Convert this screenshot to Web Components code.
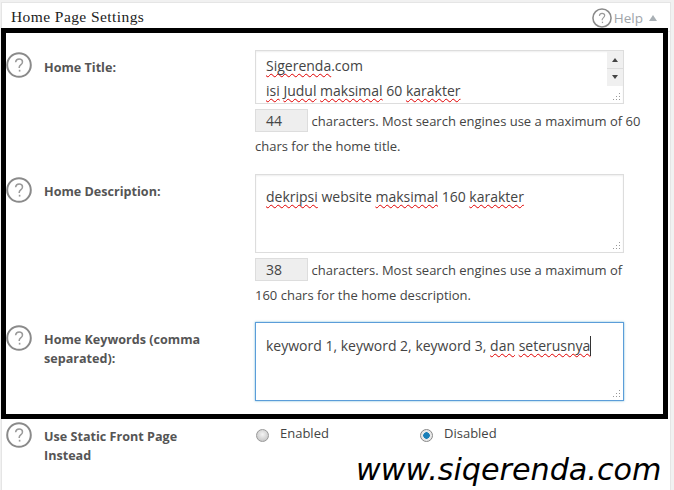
<!DOCTYPE html>
<html>
<head>
<meta charset="utf-8">
<style>
  html, body { margin: 0; padding: 0; }
  body { width: 674px; height: 490px; overflow: hidden; background: #f1f1f1; font-family: "Open Sans", sans-serif; }
  .sq { text-decoration: underline wavy #e00000 1px; text-underline-offset: 2px; text-decoration-skip-ink: none; }
  .caret { display: inline-block; width: 1px; height: 20px; background: #333; vertical-align: -5px; }
</style>
</head>
<body>
<settings-panel heading="Home Page Settings">
  <setting-group>
    <setting-row label="Home Title:" top="17" icon="2" text="8">
      <text-box height="54" pad="2" scroll>
        <span class="sq">Sigerenda</span>.com<br><span class="sq">isi</span> <span class="sq">Judul</span> <span class="sq">maksimal</span> 60 <span class="sq">karakter</span>
      </text-box>
      <char-count value="44"><span slot="first">characters. Most search engines use a maximum of 60</span>chars for the home title.</char-count>
    </setting-row>
    <setting-row label="Home Description:" top="15" icon="3" text="8">
      <text-box height="79" pad="9">
        <span class="sq">dekripsi</span> website <span class="sq">maksimal</span> 160 <span class="sq">karakter</span>
      </text-box>
      <char-count value="38"><span slot="first">characters. Most search engines use a maximum of</span>160 chars for the home description.</char-count>
    </setting-row>
    <setting-row label="Home Keywords (comma separated):" top="14" icon="3" text="8">
      <text-box height="79" pad="10" focused>
        keyword 1, keyword 2, keyword 3, <span class="sq">dan</span> <span class="sq">seterusnya</span><span class="caret"></span>
      </text-box>
    </setting-row>
  </setting-group>
  <setting-row label="Use Static Front Page Instead" top="3" icon="0" text="5" flush>
    <radio-pair></radio-pair>
  </setting-row>
</settings-panel>
<site-watermark>www.siqerenda.com</site-watermark>

<script>
const helpSvg = (size) => `
  <svg width="${size}" height="${size}" viewBox="0 0 26 26" style="display:block">
    <circle cx="13" cy="13" r="11.8" fill="#fff" stroke="#8a8a8a" stroke-width="2"/>
    <path d="M9.6 10.2c.2-2 1.6-3.2 3.5-3.2 2 0 3.4 1.2 3.4 2.9 0 1.4-.8 2.1-1.8 2.9-.9.7-1.5 1.2-1.5 2.6v.5" fill="none" stroke="#9a9a9a" stroke-width="1.5"/>
    <rect x="12.8" y="17.8" width="1.6" height="1.8" fill="#9a9a9a"/>
  </svg>`;

class SettingsPanel extends HTMLElement {
  constructor() {
    super();
    this.attachShadow({ mode: "open" }).innerHTML = `
      <style>
        :host { display: block; margin: 2px 3px 0 1px; height: 488px; background: linear-gradient(#eee, #eee) 0 28px / 100% 1px no-repeat, #fff; border: 1px solid #e5e5e5; border-bottom: 0; box-sizing: border-box; }
        .head { display: flex; align-items: flex-end; justify-content: space-between; height: 25px; padding: 0 13px 0 9px; box-sizing: border-box; }
        h3 { margin: 0 0 -1px; font: 400 15.5px/25px "Liberation Serif", serif; color: #222; letter-spacing: .42px; }
        .help { display: flex; align-items: center; color: #a0a5aa; font-size: 13.5px; height: 22px; margin-bottom: -1px; position: relative; z-index: 1; }
        .help svg { margin-right: 2px; }
        .tri { width: 0; height: 0; margin-left: 6px; border: 4px solid transparent; border-top: 0; border-bottom: 6px solid #a9b0b5; }
      </style>
      <div class="head"><h3>${this.getAttribute("heading")}</h3>
        <div class="help">${helpSvg(20)}<span>Help</span><i class="tri"></i></div>
      </div>
      <slot></slot>`;
  }
}

class SettingGroup extends HTMLElement {
  constructor() {
    super();
    this.attachShadow({ mode: "open" }).innerHTML = `
      <style>
        :host { display: block; width: 667px; height: 391px; margin-left: -1px; box-sizing: border-box; border: 5px solid #000; position: relative; }
      </style>
      <slot></slot>`;
  }
}

class SettingRow extends HTMLElement {
  constructor() {
    super();
    const flush = this.hasAttribute("flush");
    this.attachShadow({ mode: "open" }).innerHTML = `
      <style>
        :host { display: grid; grid-template-columns: ${flush ? 253 : 249}px 369px; padding-top: ${this.getAttribute("top")}px; }
        .lab { display: flex; align-items: flex-start; padding-left: ${flush ? 4 : 0}px; }
        .ico { margin-top: ${this.getAttribute("icon")}px; flex: none; }
        .txt { width: 165px; margin: ${this.getAttribute("text")}px 0 0 12px; font: 700 12.6px/19px "Open Sans", sans-serif; color: #555; }
      </style>
      <div class="lab"><div class="ico">${helpSvg(26)}</div><div class="txt">${this.getAttribute("label")}</div></div>
      <div class="field"><slot></slot></div>`;
  }
}

class TextBox extends HTMLElement {
  constructor() {
    super();
    const focused = this.hasAttribute("focused");
    const scroll = this.hasAttribute("scroll") ? `
      <div class="bar"><i class="up"></i><b></b><i class="down"></i></div>` : "";
    this.attachShadow({ mode: "open" }).innerHTML = `
      <style>
        :host { display: block; position: relative; box-sizing: border-box; height: ${this.getAttribute("height")}px; padding: ${this.getAttribute("pad")}px 10px 0; background: #fff;
          border: 1px solid ${focused ? "#5b9dd9" : "#ddd"}; ${focused ? "box-shadow: 0 0 2px rgba(30,140,190,.6);" : "box-shadow: inset 0 1px 2px rgba(0,0,0,.07);"}
          font: 400 14px/25px "Open Sans", sans-serif; color: #444; }
        .bar { position: absolute; top: 0; right: 0; bottom: 17px; width: 16px; background: #f0f0f0; display: flex; flex-direction: column; align-items: center; justify-content: center; gap: 6px; }
        .bar b { width: 100%; height: 1px; background: #ddd; }
        .bar i { width: 0; height: 0; border: 3.5px solid transparent; }
        .up { border-top: 0 !important; border-bottom: 4px solid #444 !important; }
        .down { border-bottom: 0 !important; border-top: 4px solid #444 !important; }
        svg { position: absolute; right: 2px; bottom: 2px; }
      </style>
      <slot></slot>${scroll}
      <svg width="9" height="9" fill="#999"><rect x="7" y="1" width="1" height="1"/><rect x="4" y="4" width="1" height="1"/><rect x="7" y="4" width="1" height="1"/><rect x="1" y="7" width="1" height="1"/><rect x="4" y="7" width="1" height="1"/><rect x="7" y="7" width="1" height="1"/></svg>`;
  }
}

class CharCount extends HTMLElement {
  constructor() {
    super();
    this.attachShadow({ mode: "open" }).innerHTML = `
      <style>
        :host { display: block; width: 390px; margin-top: 5px; font: 400 13px/25px "Open Sans", sans-serif; color: #444; }
        .top { display: flex; gap: 3.5px; white-space: nowrap; }
        .n { flex: none; width: 53px; height: 23px; box-sizing: border-box; padding-left: 10px; background: #eee; border: 1px solid #ddd; font-size: 14px; line-height: 22px; }
      </style>
      <div class="top"><span class="n">${this.getAttribute("value")}</span><slot name="first"></slot></div>
      <slot></slot>`;
  }
}

class RadioPair extends HTMLElement {
  constructor() {
    super();
    this.attachShadow({ mode: "open" }).innerHTML = `
      <style>
        :host { display: grid; grid-template-columns: 164px 1fr; font: 400 13px/20px "Open Sans", sans-serif; color: #444; padding-top: 1px; }
        label { display: flex; align-items: flex-start; gap: 11px; }
        .r { width: 11px; height: 11px; margin: 6px 0 0 1px; border-radius: 50%; border: 1px solid #999; background: radial-gradient(circle at 50% 40%, #f4f4f4, #bbb); }
        .on { background: radial-gradient(circle, #1a7fb8 0 3px, #e8e8e8 3.5px); border-color: #888; }
      </style>
      <label><span class="r"></span>Enabled</label>
      <label><span class="r on"></span>Disabled</label>`;
  }
}

class SiteWatermark extends HTMLElement {
  constructor() {
    super();
    this.attachShadow({ mode: "open" }).innerHTML = `
      <style>
        :host { position: absolute; left: 356px; top: 451px; font: italic 400 30.2px/38px "DejaVu Sans", sans-serif; color: #000; white-space: nowrap; }
      </style>
      <slot></slot>`;
  }
}

customElements.define("settings-panel", SettingsPanel);
customElements.define("setting-group", SettingGroup);
customElements.define("setting-row", SettingRow);
customElements.define("text-box", TextBox);
customElements.define("char-count", CharCount);
customElements.define("radio-pair", RadioPair);
customElements.define("site-watermark", SiteWatermark);
</script>
</body>
</html>
